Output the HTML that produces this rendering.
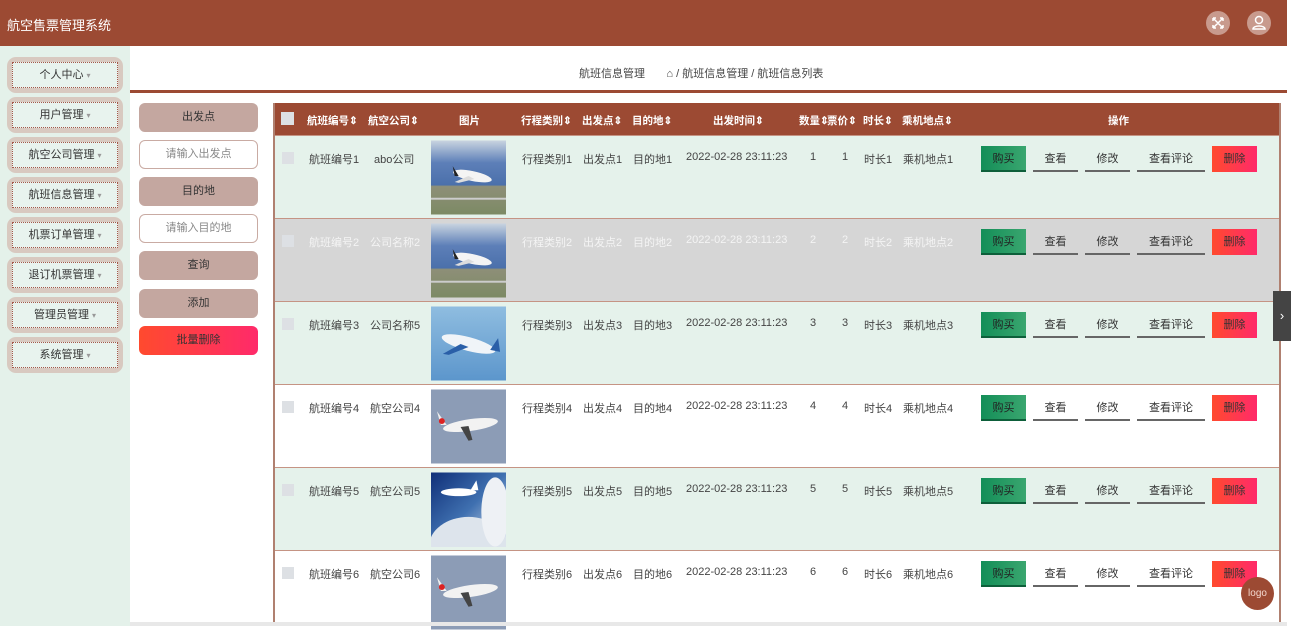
<!DOCTYPE html>
<html><head><meta charset="utf-8"><style>
*{box-sizing:border-box;margin:0;padding:0}
body{width:1291px;height:626px;overflow:hidden;background:#fff;font-family:"Liberation Sans","Noto Sans CJK SC",sans-serif;font-size:11px;color:#333;position:relative}
.hdr{position:absolute;left:0;top:0;width:1287px;height:46px;background:#9c4a33}
.hdr .t{position:absolute;left:7px;top:15px;color:#fff;font-size:13px}
.ic{position:absolute;top:11px;width:24px;height:24px;border-radius:50%;background:#c89a8d}
.side{position:absolute;left:0;top:46px;width:130px;height:580px;background:#e4f1ea}
.sb{position:absolute;left:7px;width:116px;height:36px;border-radius:9px;background:#d8c9c0}
.sb div{position:absolute;left:5px;top:5px;right:5px;bottom:5px;border:1px dotted #a5574a;background:#e8f3ee;text-align:center;line-height:24px;font-size:11px;color:#333}
.sb div span{color:#999;font-size:8px}
.bc{position:absolute;left:130px;top:46px;width:1157px;height:47px;border-bottom:3px solid #9c4a33}
.bc .x{position:absolute;left:449px;top:19px;font-size:11px;color:#444}
.fb{position:absolute;left:139px;width:119px;height:29px;border-radius:6px;background:#c4a7a0;text-align:center;line-height:29px;color:#333}
.fi{position:absolute;left:139px;width:119px;height:29px;border-radius:6px;background:#fff;border:1.5px solid #c9aba3;text-align:center;line-height:26px;color:#888}
.tbl{position:absolute;left:273px;top:103px;width:1008px;height:520px;border-left:2px solid #b08070;border-right:2px solid #b08070}
.th{position:absolute;left:0;top:0;width:1004px;height:32px;background:#9c4a33;color:#fff;font-weight:bold;font-size:10.5px}
.th span,.r span{position:absolute;white-space:nowrap}
.th span{top:10px}
.th > *{margin-left:-2px}
.r > *{margin-left:-2px}
.r{position:absolute;left:0;width:1004px;height:83px;border-top:1.5px solid #c59484}
.r span{top:15px;font-size:11px;color:#444}
.g{background:#e5f2eb}.w{background:#fff}.h{background:#d6d6d6}
.r.h span{color:#f4f4f4}
.cb{position:absolute;left:9px;top:16px;width:12px;height:12px;background:#dde0e4}
.img{position:absolute;left:158px;top:4px;width:75px;height:75px}
.b{position:absolute;top:10px;height:26px;text-align:center;line-height:26px;font-size:11px}
.buy{left:708px;width:45px;background:linear-gradient(90deg,#138e58,#3aa66f);color:#222;border-bottom:2px solid #0d5f3a}
.lk{border-bottom:2px solid #666;color:#333}
.del{left:939px;width:45px;background:linear-gradient(90deg,#ff4a2e,#ff2a6a);color:#333}
</style></head><body>
<svg width="0" height="0" style="position:absolute"><defs>
<linearGradient id="gA" x1="0" y1="0" x2="0" y2="1"><stop offset="0" stop-color="#c9d4e0"/><stop offset=".3" stop-color="#5d7fb8"/><stop offset=".6" stop-color="#4b70ab"/><stop offset=".62" stop-color="#8e8f78"/><stop offset="1" stop-color="#7c8a64"/></linearGradient>
<linearGradient id="gB" x1="0" y1="0" x2="0" y2="1"><stop offset="0" stop-color="#8fbde0"/><stop offset="1" stop-color="#5c96cc"/></linearGradient>
<linearGradient id="gD" x1="0" y1="0" x2="1" y2="1"><stop offset="0" stop-color="#0f2f78"/><stop offset=".5" stop-color="#3f70b0"/><stop offset="1" stop-color="#e8eef5"/></linearGradient>
</defs></svg>
<div class="hdr"><div class="t">航空售票管理系统</div>
<div class="ic" style="left:1206px"><svg width="24" height="24"><path d="M7 7l10 10M17 7L7 17M7 7h3M7 7v3M17 17h-3M17 17v-3M17 7h-3M17 7v3M7 17h3M7 17v-3" stroke="#fff" stroke-width="1.5" fill="none"/></svg></div>
<div class="ic" style="left:1247px"><svg width="24" height="24"><circle cx="12" cy="9" r="3.5" stroke="#fff" stroke-width="1.5" fill="none"/><path d="M6 18c0-4 12-4 12 0z" stroke="#fff" stroke-width="1.5" fill="none"/></svg></div>
</div>
<div class="side">
<div class="sb" style="top:11px"><div>个人中心 <span>▾</span></div></div>
<div class="sb" style="top:51px"><div>用户管理 <span>▾</span></div></div>
<div class="sb" style="top:91px"><div>航空公司管理 <span>▾</span></div></div>
<div class="sb" style="top:131px"><div>航班信息管理 <span>▾</span></div></div>
<div class="sb" style="top:171px"><div>机票订单管理 <span>▾</span></div></div>
<div class="sb" style="top:211px"><div>退订机票管理 <span>▾</span></div></div>
<div class="sb" style="top:251px"><div>管理员管理 <span>▾</span></div></div>
<div class="sb" style="top:291px"><div>系统管理 <span>▾</span></div></div>
</div>
<div class="bc"><div class="x">航班信息管理 &nbsp; &nbsp; &nbsp; ⌂ / 航班信息管理 / 航班信息列表</div></div>
<div class="fb" style="top:103px">出发点</div>
<div class="fi" style="top:140px">请输入出发点</div>
<div class="fb" style="top:177px">目的地</div>
<div class="fi" style="top:214px">请输入目的地</div>
<div class="fb" style="top:251px">查询</div>
<div class="fb" style="top:289px">添加</div>
<div class="fb" style="top:326px;background:linear-gradient(90deg,#ff4a2e,#ff2a6a)">批量删除</div>
<div class="tbl">
<div class="th"><div style="position:absolute;left:8px;top:9px;width:13px;height:13px;background:#dde0e4"></div>
<span style="left:34px">航班编号⇕</span><span style="left:95px">航空公司⇕</span><span style="left:186px">图片</span><span style="left:248px">行程类别⇕</span><span style="left:309px">出发点⇕</span><span style="left:359px">目的地⇕</span><span style="left:440px">出发时间⇕</span><span style="left:526px">数量⇕</span><span style="left:554px">票价⇕</span><span style="left:590px">时长⇕</span><span style="left:629px">乘机地点⇕</span><span style="left:835px">操作</span></div>

<div class="r g" style="top:32px"><div class="cb"></div><span style="left:36px">航班编号1</span><span style="left:101px">abo公司</span>
<svg class="img" viewBox="0 0 76 75"><rect width="76" height="75" fill="url(#gA)"/><ellipse cx="42" cy="36" rx="20" ry="5" fill="#f4f4f4" transform="rotate(12 42 36)"/><path d="M22 26l6 10h-4z" fill="#222"/><path d="M38 36l-14 6 4 1 16-4z" fill="#ddd"/><rect y="58" width="76" height="2" fill="#ccc"/></svg>
<span style="left:249px">行程类别1</span><span style="left:310px">出发点1</span><span style="left:360px">目的地1</span><span style="left:413px">2022-02-28 23:11:23</span><span style="left:537px">1</span><span style="left:569px">1</span><span style="left:591px">时长1</span><span style="left:630px">乘机地点1</span>
<div class="b buy">购买</div><div class="b lk" style="left:760px;width:45px">查看</div><div class="b lk" style="left:812px;width:45px">修改</div><div class="b lk" style="left:864px;width:68px">查看评论</div><div class="b del">删除</div></div>

<div class="r h" style="top:115px"><div class="cb"></div><span style="left:36px">航班编号2</span><span style="left:97px">公司名称2</span>
<svg class="img" viewBox="0 0 76 75"><rect width="76" height="75" fill="url(#gA)"/><ellipse cx="42" cy="36" rx="20" ry="5" fill="#f4f4f4" transform="rotate(12 42 36)"/><path d="M22 26l6 10h-4z" fill="#222"/><path d="M38 36l-14 6 4 1 16-4z" fill="#ddd"/><rect y="58" width="76" height="2" fill="#ccc"/></svg>
<span style="left:249px">行程类别2</span><span style="left:310px">出发点2</span><span style="left:360px">目的地2</span><span style="left:413px">2022-02-28 23:11:23</span><span style="left:537px">2</span><span style="left:569px">2</span><span style="left:591px">时长2</span><span style="left:630px">乘机地点2</span>
<div class="b buy">购买</div><div class="b lk" style="left:760px;width:45px">查看</div><div class="b lk" style="left:812px;width:45px">修改</div><div class="b lk" style="left:864px;width:68px">查看评论</div><div class="b del">删除</div></div>

<div class="r g" style="top:198px"><div class="cb"></div><span style="left:36px">航班编号3</span><span style="left:97px">公司名称5</span>
<svg class="img" viewBox="0 0 76 75"><rect width="76" height="75" fill="url(#gB)"/><ellipse cx="38" cy="38" rx="28" ry="7" fill="#f0f4f8" transform="rotate(15 38 38)"/><path d="M30 38l-18 10 6 1 20-8z" fill="#2a5fa8"/><path d="M60 44l8 -12 2 14z" fill="#2a5fa8"/></svg>
<span style="left:249px">行程类别3</span><span style="left:310px">出发点3</span><span style="left:360px">目的地3</span><span style="left:413px">2022-02-28 23:11:23</span><span style="left:537px">3</span><span style="left:569px">3</span><span style="left:591px">时长3</span><span style="left:630px">乘机地点3</span>
<div class="b buy">购买</div><div class="b lk" style="left:760px;width:45px">查看</div><div class="b lk" style="left:812px;width:45px">修改</div><div class="b lk" style="left:864px;width:68px">查看评论</div><div class="b del">删除</div></div>

<div class="r w" style="top:281px"><div class="cb"></div><span style="left:36px">航班编号4</span><span style="left:97px">航空公司4</span>
<svg class="img" viewBox="0 0 76 75"><rect width="76" height="75" fill="#8c9cb6"/><ellipse cx="40" cy="36" rx="28" ry="6" fill="#f2f2f2" transform="rotate(-8 40 36)"/><path d="M6 22l10 14h-6z" fill="#eee"/><circle cx="11" cy="32" r="3" fill="#d22"/><path d="M30 38l8 14 4-1-4-14z" fill="#444"/></svg>
<span style="left:249px">行程类别4</span><span style="left:310px">出发点4</span><span style="left:360px">目的地4</span><span style="left:413px">2022-02-28 23:11:23</span><span style="left:537px">4</span><span style="left:569px">4</span><span style="left:591px">时长4</span><span style="left:630px">乘机地点4</span>
<div class="b buy">购买</div><div class="b lk" style="left:760px;width:45px">查看</div><div class="b lk" style="left:812px;width:45px">修改</div><div class="b lk" style="left:864px;width:68px">查看评论</div><div class="b del">删除</div></div>

<div class="r g" style="top:364px"><div class="cb"></div><span style="left:36px">航班编号5</span><span style="left:97px">航空公司5</span>
<svg class="img" viewBox="0 0 76 75"><rect width="76" height="75" fill="url(#gD)"/><ellipse cx="38" cy="75" rx="40" ry="30" fill="#dde4ec"/><ellipse cx="65" cy="40" rx="14" ry="35" fill="#eef1f5"/><ellipse cx="28" cy="20" rx="18" ry="4" fill="#fff"/><path d="M40 18l6-10 2 10z" fill="#fff"/></svg>
<span style="left:249px">行程类别5</span><span style="left:310px">出发点5</span><span style="left:360px">目的地5</span><span style="left:413px">2022-02-28 23:11:23</span><span style="left:537px">5</span><span style="left:569px">5</span><span style="left:591px">时长5</span><span style="left:630px">乘机地点5</span>
<div class="b buy">购买</div><div class="b lk" style="left:760px;width:45px">查看</div><div class="b lk" style="left:812px;width:45px">修改</div><div class="b lk" style="left:864px;width:68px">查看评论</div><div class="b del">删除</div></div>

<div class="r w" style="top:447px"><div class="cb"></div><span style="left:36px">航班编号6</span><span style="left:97px">航空公司6</span>
<svg class="img" viewBox="0 0 76 75"><rect width="76" height="75" fill="#8c9cb6"/><ellipse cx="40" cy="36" rx="28" ry="6" fill="#f2f2f2" transform="rotate(-8 40 36)"/><path d="M6 22l10 14h-6z" fill="#eee"/><circle cx="11" cy="32" r="3" fill="#d22"/><path d="M30 38l8 14 4-1-4-14z" fill="#444"/></svg>
<span style="left:249px">行程类别6</span><span style="left:310px">出发点6</span><span style="left:360px">目的地6</span><span style="left:413px">2022-02-28 23:11:23</span><span style="left:537px">6</span><span style="left:569px">6</span><span style="left:591px">时长6</span><span style="left:630px">乘机地点6</span>
<div class="b buy">购买</div><div class="b lk" style="left:760px;width:45px">查看</div><div class="b lk" style="left:812px;width:45px">修改</div><div class="b lk" style="left:864px;width:68px">查看评论</div><div class="b del">删除</div></div>
</div>
<div style="position:absolute;left:130px;top:622px;width:1157px;height:4px;background:#e8e8e8"></div>
<div style="position:absolute;left:1287px;top:0;width:4px;height:626px;background:#fff"></div>
<div style="position:absolute;left:1273px;top:291px;width:18px;height:50px;background:#444;color:#fff;font-size:13px;line-height:50px;text-align:center">›</div>
<div style="position:absolute;left:1241px;top:577px;width:33px;height:33px;border-radius:50%;background:#9c4a33;color:#f3d8cf;font-size:10px;text-align:center;line-height:33px">logo</div>
</body></html>
